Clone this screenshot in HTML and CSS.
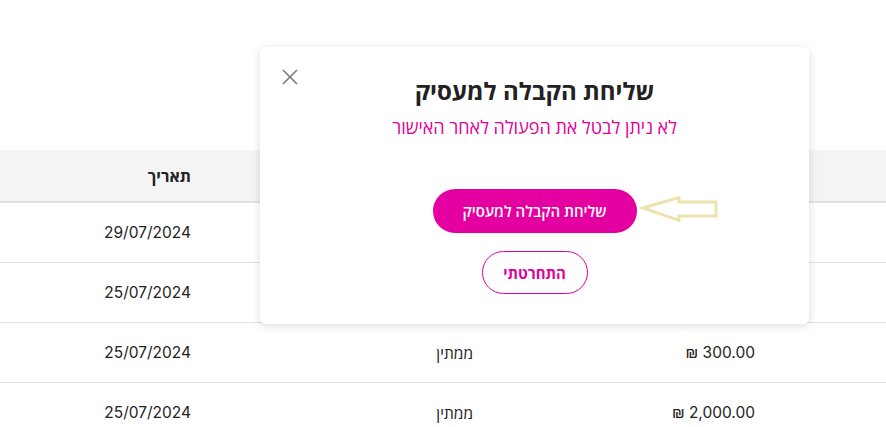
FILE: index.html
```html
<!DOCTYPE html>
<html lang="he" dir="rtl">
<head>
<meta charset="utf-8">
<link rel="stylesheet" href="styles.css">
</head>
<body>
<div class="page">
  <div class="table">
    <div class="row head">
      <div class="cell"></div>
      <div class="cell">סכום</div>
      <div class="cell">סטטוס</div>
      <div class="cell">תאריך</div>
    </div>
    <div class="row">
      <div class="cell"></div>
      <div class="cell"><span class="amount">₪ 1,200.00</span></div>
      <div class="cell">ממתין</div>
      <div class="cell">29/07/2024</div>
    </div>
    <div class="row">
      <div class="cell"></div>
      <div class="cell"><span class="amount">₪ 500.00</span></div>
      <div class="cell">ממתין</div>
      <div class="cell">25/07/2024</div>
    </div>
    <div class="row">
      <div class="cell"></div>
      <div class="cell"><span class="amount">₪ 300.00</span></div>
      <div class="cell">ממתין</div>
      <div class="cell">25/07/2024</div>
    </div>
    <div class="row">
      <div class="cell"></div>
      <div class="cell"><span class="amount">₪ 2,000.00</span></div>
      <div class="cell">ממתין</div>
      <div class="cell">25/07/2024</div>
    </div>
  </div>

  <div class="modal">
    <button class="close" aria-label="סגירה">
      <svg width="16" height="16" viewBox="0 0 16 16"><path d="M1 1L15 15M15 1L1 15" stroke="#7a7a7a" stroke-width="1.6" fill="none"/></svg>
    </button>
    <h2 class="title">שליחת הקבלה למעסיק</h2>
    <p class="subtitle">לא ניתן לבטל את הפעולה לאחר האישור</p>
    <div class="actions">
      <div class="primary-wrap">
        <button class="btn primary">שליחת הקבלה למעסיק</button>
        <svg class="arrow" width="80" height="28" viewBox="0 0 80 28"><path d="M3 12 L39 1.5 L39 6 L76 6 L76 20 L39 20 L39 24.5 Z" fill="none" stroke="#eee2ae" stroke-width="3" stroke-linejoin="miter"/></svg>
      </div>
      <button class="btn secondary">התחרטתי</button>
    </div>
  </div>
</div>
</body>
</html>
```

FILE: styles.css
```css
* { box-sizing: border-box; }
html, body { margin: 0; padding: 0; }
body {
  background: #fff;
  font-family: "Open Sans", "Liberation Sans", "DejaVu Sans", sans-serif;
  color: #222;
  width: 886px;
  height: 427px;
  overflow: hidden;
}
.page {
  position: relative;
  padding-top: 150px;
}
.table { width: 886px; }
.row {
  display: grid;
  grid-template-columns: 131px 282px 282px 191px;
  height: 60px;
  border-bottom: 1px solid #e2e2e2;
  align-items: center;
  font-family: "Inter", "Open Sans", "Liberation Sans", sans-serif;
  font-size: 15.5px;
  color: #222;
}
.row.head {
  height: 53px;
  background: #f4f4f4;
  border-bottom: 2px solid #e2e2e2;
  font-family: "Open Sans", "Liberation Sans", sans-serif;
  font-weight: 700;
  font-size: 16px;
}
.cell { text-align: right; }
.amount { direction: ltr; unicode-bidi: isolate; display: inline-block; }

.modal {
  position: absolute;
  left: 260px;
  top: 47px;
  width: 549px;
  height: 277px;
  background: #fff;
  border-radius: 6px;
  box-shadow: 0 2px 10px rgba(0,0,0,0.14);
  display: flex;
  flex-direction: column;
  align-items: center;
  padding-top: 28px;
}
.close {
  position: absolute;
  left: 21px;
  top: 21px;
  width: 18px;
  height: 18px;
  padding: 0;
  border: 0;
  background: none;
  display: flex;
  align-items: center;
  justify-content: center;
}
.title {
  margin: 0;
  font-size: 24px;
  line-height: 32px;
  font-weight: 700;
  color: #222;
}
.subtitle {
  margin: 5px 0 0;
  font-size: 18px;
  line-height: 30px;
  color: #e0009a;
}
.actions {
  margin-top: 47px;
  display: flex;
  flex-direction: column;
  align-items: center;
  gap: 18px;
}
.primary-wrap { position: relative; }
.arrow {
  position: absolute;
  left: 207px;
  top: 7px;
}
.btn {
  font-family: inherit;
  border-radius: 999px;
  height: 44px;
  cursor: pointer;
}
.primary {
  width: 204px;
  background: #e400a0;
  color: #fff;
  border: 0;
  font-size: 15px;
  font-weight: 600;
}
.secondary {
  width: 106px;
  height: 43px;
  background: #fff;
  color: #e0009a;
  border: 1px solid #e0009a;
  font-size: 15px;
  font-weight: 700;
}
```
